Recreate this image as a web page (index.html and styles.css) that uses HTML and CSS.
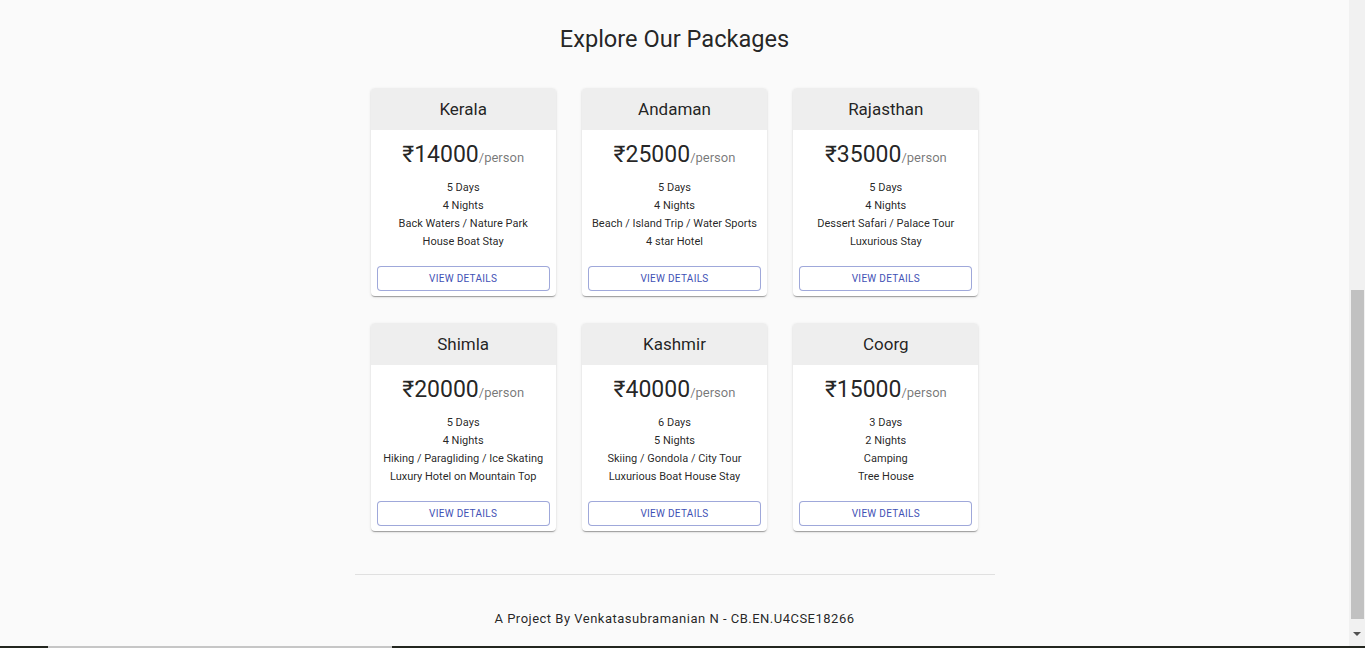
FILE: index.html
```html
<!DOCTYPE html>
<html lang="en">
<head>
<meta charset="utf-8">
<title>Explore Our Packages</title>
<link rel="stylesheet" href="styles.css">
</head>
<body>
<div class="screen">
  <div class="viewport">
    <main class="page">
      <h1 class="title">Explore Our Packages</h1>
      <section class="grid">
        <article class="card">
          <header class="card-head">Kerala</header>
          <div class="card-body">
            <div class="price"><span class="amount">₹14000</span><span class="per">/person</span></div>
            <ul class="details">
              <li>5 Days</li><li>4 Nights</li><li>Back Waters / Nature Park</li><li>House Boat Stay</li>
            </ul>
            <button class="btn">View Details</button>
          </div>
        </article>
        <article class="card">
          <header class="card-head">Andaman</header>
          <div class="card-body">
            <div class="price"><span class="amount">₹25000</span><span class="per">/person</span></div>
            <ul class="details">
              <li>5 Days</li><li>4 Nights</li><li>Beach / Island Trip / Water Sports</li><li>4 star Hotel</li>
            </ul>
            <button class="btn">View Details</button>
          </div>
        </article>
        <article class="card">
          <header class="card-head">Rajasthan</header>
          <div class="card-body">
            <div class="price"><span class="amount">₹35000</span><span class="per">/person</span></div>
            <ul class="details">
              <li>5 Days</li><li>4 Nights</li><li>Dessert Safari / Palace Tour</li><li>Luxurious Stay</li>
            </ul>
            <button class="btn">View Details</button>
          </div>
        </article>
        <article class="card">
          <header class="card-head">Shimla</header>
          <div class="card-body">
            <div class="price"><span class="amount">₹20000</span><span class="per">/person</span></div>
            <ul class="details">
              <li>5 Days</li><li>4 Nights</li><li>Hiking / Paragliding / Ice Skating</li><li>Luxury Hotel on Mountain Top</li>
            </ul>
            <button class="btn">View Details</button>
          </div>
        </article>
        <article class="card">
          <header class="card-head">Kashmir</header>
          <div class="card-body">
            <div class="price"><span class="amount">₹40000</span><span class="per">/person</span></div>
            <ul class="details">
              <li>6 Days</li><li>5 Nights</li><li>Skiing / Gondola / City Tour</li><li>Luxurious Boat House Stay</li>
            </ul>
            <button class="btn">View Details</button>
          </div>
        </article>
        <article class="card">
          <header class="card-head">Coorg</header>
          <div class="card-body">
            <div class="price"><span class="amount">₹15000</span><span class="per">/person</span></div>
            <ul class="details">
              <li>3 Days</li><li>2 Nights</li><li>Camping</li><li>Tree House</li>
            </ul>
            <button class="btn">View Details</button>
          </div>
        </article>
      </section>
      <hr class="divider">
      <footer class="footer">A Project By Venkatasubramanian N - CB.EN.U4CSE18266</footer>
    </main>
    <div class="scrollbar">
      <div class="track"><div class="thumb"></div></div>
      <div class="arrow"><svg width="8" height="4" viewBox="0 0 8 4"><path d="M0 0H8L4 4Z" fill="#505050"/></svg></div>
    </div>
  </div>
  <div class="taskbar"><span class="tb-dark a"></span><span class="tb-light"></span><span class="tb-dark b"></span></div>
</div>
</body>
</html>
```

FILE: styles.css
```css
* { box-sizing: border-box; }
html, body { margin: 0; padding: 0; }
body {
  background: #fafafa;
  font-family: Roboto, "Liberation Sans", Arial, sans-serif;
  color: rgba(0,0,0,0.87);
  height: 648px;
  overflow: hidden;
}
.screen { display: flex; flex-direction: column; height: 648px; }
.viewport { flex: 1; display: flex; min-height: 0; }
.page { flex: 1; display: flex; flex-direction: column; align-items: center; padding-top: 25px; }
.title { margin: 0; font-size: 23.6px; font-weight: 400; line-height: 28px; }
.grid {
  margin-top: 35px;
  width: 608px;
  display: grid;
  grid-template-columns: repeat(3, 1fr);
  column-gap: 26px;
  row-gap: 27px;
}
.card {
  background: #fff;
  border-radius: 4px;
  overflow: hidden;
  box-shadow: 0 2px 1px -1px rgba(0,0,0,0.2), 0 1px 1px 0 rgba(0,0,0,0.14), 0 1px 3px 0 rgba(0,0,0,0.12);
}
.card-head {
  background: #eeeeee;
  height: 42px;
  display: flex; align-items: center; justify-content: center;
  font-size: 17px;
  padding-bottom: 1px;
}
.card-body { padding: 10px 6px 5px; display: flex; flex-direction: column; align-items: stretch; text-align: center; }
.price { line-height: 30px; height: 30px; }
.amount { font-size: 23px; }
.per { font-size: 13px; color: rgba(0,0,0,0.54); }
.details { list-style: none; margin: 9px 0 0; padding: 0; font-size: 11px; line-height: 18px; color: rgba(0,0,0,0.87); }
.btn {
  margin-top: 15px;
  height: 25px;
  border: 1px solid rgba(63,81,181,0.5);
  border-radius: 4px;
  background: #fff;
  color: #3f51b5;
  font-family: inherit;
  font-size: 10px;
  font-weight: 400;
  letter-spacing: 0.03em;
  text-transform: uppercase;
  padding: 0;
}
.divider { width: 640px; margin: 43px 0 0; border: 0; border-top: 1px solid #e0e0e0; }
.footer { margin-top: 35px; font-size: 13px; line-height: 18px; letter-spacing: 0.038em; }
.scrollbar { width: 16px; background: #f1f1f1; display: flex; flex-direction: column; }
.track { flex: 1; padding: 290px 1px 13px 2px; display: flex; }
.thumb { flex: 1; background: #c1c1c1; }
.arrow { height: 14px; display: flex; justify-content: center; align-items: flex-start; }
.taskbar { height: 2px; display: flex; }
.tb-dark { background: #23261f; }
.tb-dark.a { width: 48px; }
.tb-light { width: 344px; background: #c6c6c6; }
.tb-dark.b { flex: 1; }
```
